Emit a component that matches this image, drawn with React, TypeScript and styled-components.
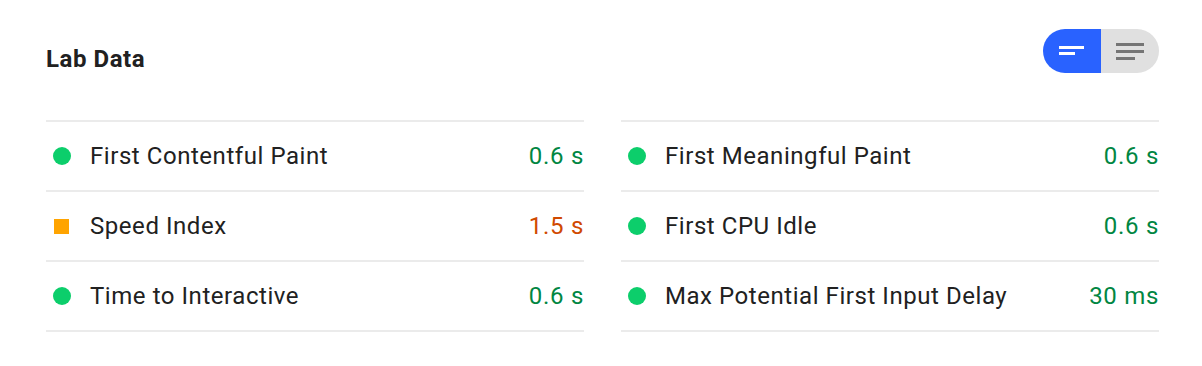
import styled, { createGlobalStyle } from "styled-components";

const GlobalStyle = createGlobalStyle`
  body {
    margin: 0;
    background: #ffffff;
    font-family: Roboto, "Liberation Sans", sans-serif;
    color: #212121;
  }
`;

const Page = styled.div`
  padding: 28px 43px 0 46px;
`;

const Header = styled.div`
  display: flex;
  justify-content: space-between;
  align-items: flex-start;
  height: 92px;
`;

const Title = styled.h2`
  margin: 15px 0 0 0;
  font-size: 24px;
  line-height: 32px;
  letter-spacing: 0.55px;
  font-weight: 700;
  color: #212121;
`;

const Toggle = styled.div`
  display: flex;
  height: 44px;
  margin-top: 1px;
  border-radius: 22px;
  overflow: hidden;
`;

const ToggleButton = styled.div<{ $active: boolean }>`
  width: 58px;
  display: flex;
  align-items: center;
  justify-content: center;
  background: ${(p) => (p.$active ? "#2962ff" : "#e0e0e0")};
`;

const Grid = styled.div`
  display: grid;
  grid-template-columns: 1fr 1fr;
  column-gap: 37px;
`;

const Column = styled.div`
  border-top: 2px solid #ebebeb;
`;

const Row = styled.div`
  height: 68px;
  display: flex;
  align-items: center;
  border-bottom: 2px solid #ebebeb;
`;

const Marker = styled.span<{ $kind: "pass" | "average" }>`
  flex: none;
  margin-left: ${(p) => (p.$kind === "pass" ? "7px" : "8px")};
  margin-right: ${(p) => (p.$kind === "pass" ? "19px" : "21px")};
  width: ${(p) => (p.$kind === "pass" ? "18px" : "15px")};
  height: ${(p) => (p.$kind === "pass" ? "18px" : "15px")};
  border-radius: ${(p) => (p.$kind === "pass" ? "50%" : "0")};
  background: ${(p) => (p.$kind === "pass" ? "#0cce6b" : "#ffa400")};
`;

const Label = styled.span`
  flex: 1;
  font-size: 24px;
  letter-spacing: 0.55px;
  color: #212121;
`;

const Value = styled.span<{ $kind: "pass" | "average" }>`
  font-size: 24px;
  letter-spacing: 0.7px;
  font-weight: 400;
  color: ${(p) => (p.$kind === "pass" ? "#018642" : "#d04900")};
`;

type Metric = { label: string; value: string; kind: "pass" | "average" };

const left: Metric[] = [
  { label: "First Contentful Paint", value: "0.6 s", kind: "pass" },
  { label: "Speed Index", value: "1.5 s", kind: "average" },
  { label: "Time to Interactive", value: "0.6 s", kind: "pass" },
];

const right: Metric[] = [
  { label: "First Meaningful Paint", value: "0.6 s", kind: "pass" },
  { label: "First CPU Idle", value: "0.6 s", kind: "pass" },
  { label: "Max Potential First Input Delay", value: "30 ms", kind: "pass" },
];

const OpportunityIcon = () => (
  <svg width="26" height="10" viewBox="0 0 26 10">
    <rect x="0" y="0" width="25" height="3" fill="#fff" />
    <rect x="0" y="6" width="16" height="3" fill="#fff" />
  </svg>
);

const ListIcon = () => (
  <svg width="28" height="17" viewBox="0 0 28 17">
    <rect x="0" y="0" width="28" height="3" fill="#757575" />
    <rect x="0" y="7" width="28" height="3" fill="#757575" />
    <rect x="0" y="14" width="19" height="3" fill="#757575" />
  </svg>
);

const MetricColumn = ({ items }: { items: Metric[] }) => (
  <Column>
    {items.map((m) => (
      <Row key={m.label}>
        <Marker $kind={m.kind} />
        <Label>{m.label}</Label>
        <Value $kind={m.kind}>{m.value}</Value>
      </Row>
    ))}
  </Column>
);

export default function App() {
  return (
    <>
      <GlobalStyle />
      <Page>
        <Header>
          <Title>Lab Data</Title>
          <Toggle>
            <ToggleButton $active>
              <OpportunityIcon />
            </ToggleButton>
            <ToggleButton $active={false}>
              <ListIcon />
            </ToggleButton>
          </Toggle>
        </Header>
        <Grid>
          <MetricColumn items={left} />
          <MetricColumn items={right} />
        </Grid>
      </Page>
    </>
  );
}
